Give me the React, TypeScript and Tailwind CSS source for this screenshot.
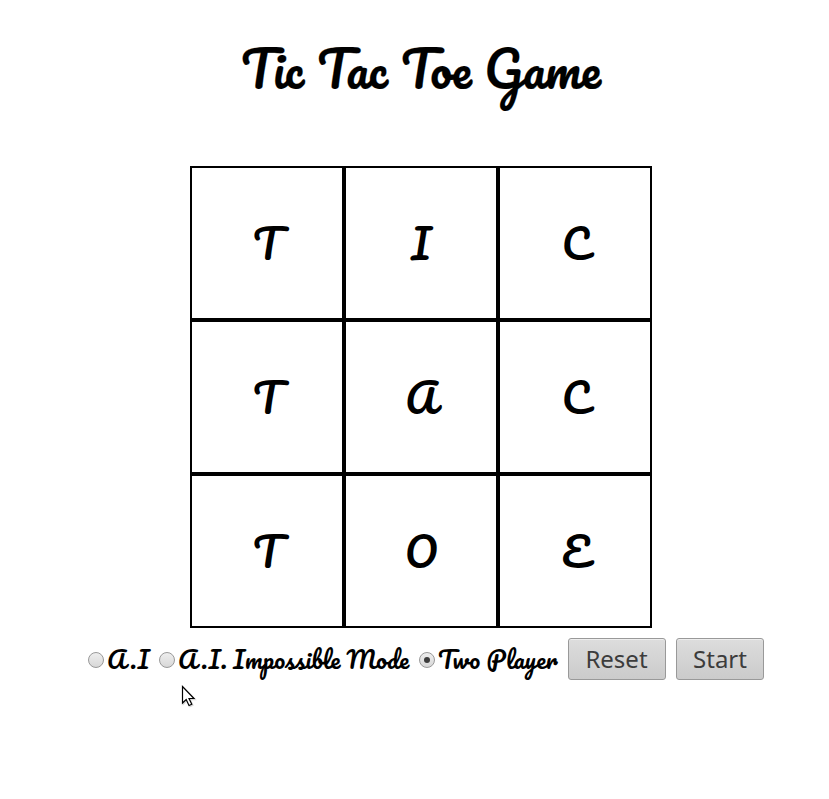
const cells = ['T', 'I', 'C', 'T', 'A', 'C', 'T', 'O', 'E'];

const script = "font-['Pacifico',cursive] font-normal text-black";

function Radio({ checked = false }: { checked?: boolean }) {
  return (
    <span className="mt-0.5 flex size-4 shrink-0 items-center justify-center rounded-full border border-[#999] bg-linear-to-b from-[#eeeeee] to-[#d8d8d8]">
      {checked && <span className="size-1.5 rounded-full bg-[#3c3c3c]" />}
    </span>
  );
}

function Button({ label, className }: { label: string; className: string }) {
  return (
    <button
      className={`h-[42px] rounded-[3px] border border-[#999] bg-linear-to-b from-[#dddddd] to-[#cbcbcb] font-['Noto_Sans',sans-serif] text-2xl leading-10 text-[#3c3c3c] shadow-[inset_0_1px_0_#eeeeee] ${className}`}
    >
      {label}
    </button>
  );
}

export default function App() {
  return (
    <main className="relative h-[799px] w-[829px] overflow-hidden bg-white">
      <h1 className={`h-[166px] pt-[33px] pl-[241px] text-[48px] leading-[72px] [word-spacing:0.2px] whitespace-nowrap [-webkit-text-stroke:0.2px_black] ${script}`}>
        Tic Tac Toe Game
      </h1>
      <div className="ml-[190px] grid w-[462px] grid-cols-3">
        {cells.map((cell, i) => (
          <div
            key={i}
            className={`flex size-[154px] items-center justify-center border-2 border-black text-[40px] leading-none ${script} ${i % 3 === 2 ? 'pl-px' : ''}`}
          >
            {cell}
          </div>
        ))}
      </div>
      <div className={`flex pt-2.5 pl-[88px] text-[24px] leading-[42px] whitespace-nowrap ${script}`}>
        <label className="flex w-[71px] items-center gap-[3px]">
          <Radio />
          <span>A.I</span>
        </label>
        <label className="flex w-[260px] items-center gap-[3px]">
          <Radio />
          <span className="[word-spacing:-0.25px]">A.I. Impossible Mode</span>
        </label>
        <label className="flex w-[149px] items-center gap-[3px]">
          <Radio checked />
          <span>Two Player</span>
        </label>
        <div className="flex gap-2.5">
          <Button label="Reset" className="w-[98px] pr-px" />
          <Button label="Start" className="w-[88px]" />
        </div>
      </div>
      <svg className="absolute top-[685px] left-[181px]" width="16" height="24" viewBox="0 0 16 24">
        <path d="M2.5 2.5V19L6.2 15.5L9 21.5L11.8 20.2L9 14.5H14Z" fill="none" stroke="black" strokeOpacity="0.15" strokeWidth="1.5" />
        <path d="M1.5 1.5V18L5.2 14.5L8 20.5L10.8 19.2L8 13.5H13Z" fill="white" stroke="black" strokeWidth="1.2" />
      </svg>
    </main>
  );
}
